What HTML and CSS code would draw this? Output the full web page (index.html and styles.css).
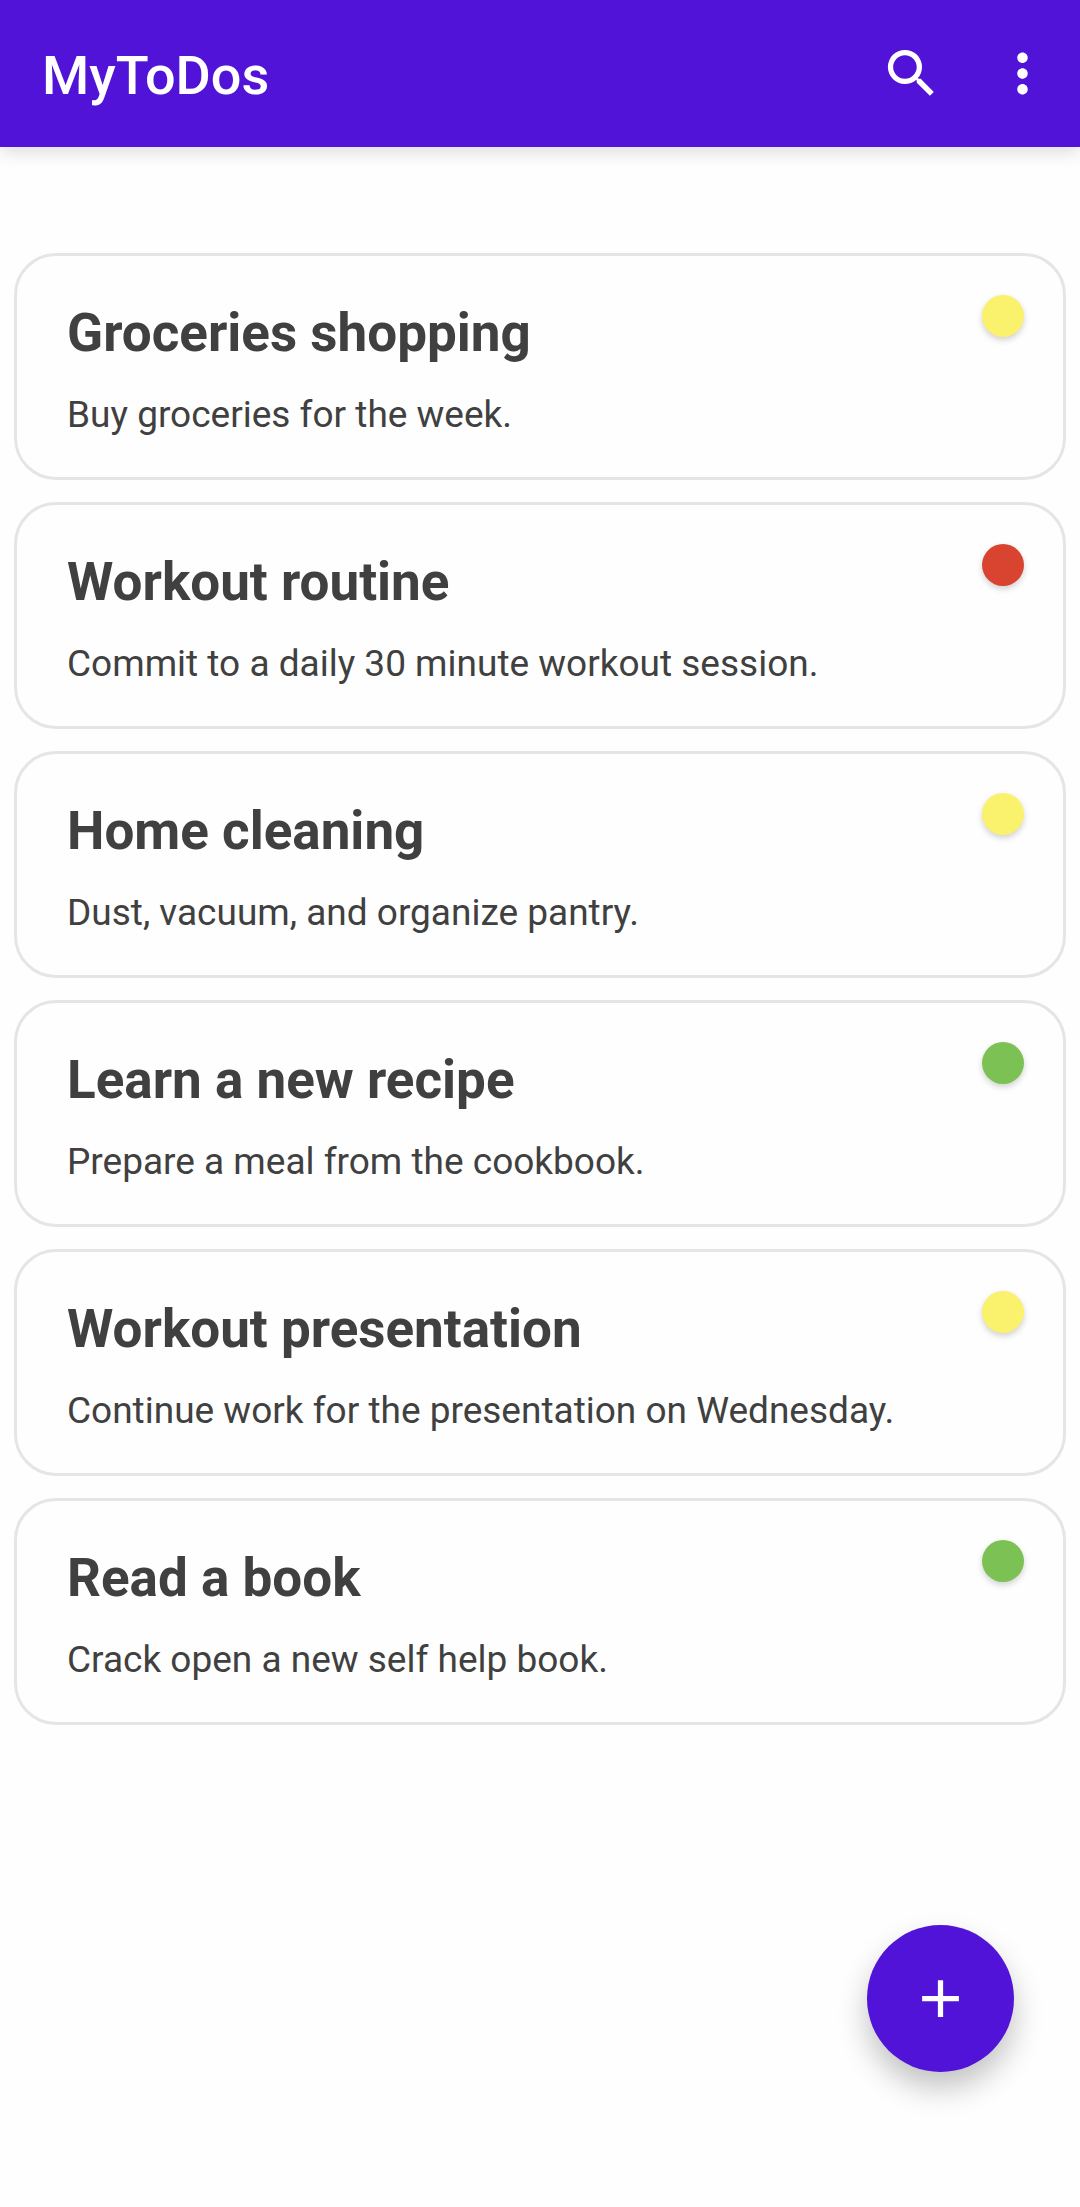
FILE: index.html
```html
<!DOCTYPE html>
<html lang="en">
<head>
<meta charset="utf-8">
<meta name="viewport" content="width=device-width, initial-scale=1">
<title>MyToDos</title>
<link rel="stylesheet" href="styles.css">
</head>
<body>
<header class="app-bar">
  <h1 class="app-title">MyToDos</h1>
  <button class="icon-button" type="button" aria-label="Search">
    <svg class="icon" viewBox="0 0 24 24" aria-hidden="true"><path d="M15.5 14h-.79l-.28-.27A6.471 6.471 0 0 0 16 9.5 6.5 6.5 0 1 0 9.5 16c1.61 0 3.09-.59 4.23-1.57l.27.28v.79l5 4.99L20.49 19l-4.99-5zm-6 0C7.01 14 5 11.99 5 9.5S7.01 5 9.5 5 14 7.01 14 9.5 11.99 14 9.5 14z"/></svg>
  </button>
  <button class="icon-button" type="button" aria-label="More options">
    <svg class="icon" viewBox="0 0 24 24" aria-hidden="true"><path d="M12 8c1.1 0 2-.9 2-2s-.9-2-2-2-2 .9-2 2 .9 2 2 2zm0 2c-1.1 0-2 .9-2 2s.9 2 2 2 2-.9 2-2-.9-2-2-2zm0 6c-1.1 0-2 .9-2 2s.9 2 2 2 2-.9 2-2-.9-2-2-2z"/></svg>
  </button>
</header>
<main>
  <ul class="todo-list">
    <li class="todo">
      <div class="todo-text">
        <h2 class="todo-title">Groceries shopping</h2>
        <p class="todo-note">Buy groceries for the week.</p>
      </div>
      <span class="priority priority-medium"></span>
    </li>
    <li class="todo">
      <div class="todo-text">
        <h2 class="todo-title">Workout routine</h2>
        <p class="todo-note">Commit to a daily 30 minute workout session.</p>
      </div>
      <span class="priority priority-high"></span>
    </li>
    <li class="todo">
      <div class="todo-text">
        <h2 class="todo-title">Home cleaning</h2>
        <p class="todo-note">Dust, vacuum, and organize pantry.</p>
      </div>
      <span class="priority priority-medium"></span>
    </li>
    <li class="todo">
      <div class="todo-text">
        <h2 class="todo-title">Learn a new recipe</h2>
        <p class="todo-note">Prepare a meal from the cookbook.</p>
      </div>
      <span class="priority priority-low"></span>
    </li>
    <li class="todo">
      <div class="todo-text">
        <h2 class="todo-title">Workout presentation</h2>
        <p class="todo-note">Continue work for the presentation on Wednesday.</p>
      </div>
      <span class="priority priority-medium"></span>
    </li>
    <li class="todo">
      <div class="todo-text">
        <h2 class="todo-title">Read a book</h2>
        <p class="todo-note">Crack open a new self help book.</p>
      </div>
      <span class="priority priority-low"></span>
    </li>
  </ul>
</main>
<button class="fab" type="button" aria-label="Add to-do">
  <svg class="icon" viewBox="0 0 24 24" aria-hidden="true"><path d="M19 13h-6v6h-2v-6H5v-2h6V5h2v6h6v2z"/></svg>
</button>
</body>
</html>
```
FILE: styles.css
```css
* {
  box-sizing: border-box;
}

body {
  margin: 0;
  background: #fefefe;
  color: #404040;
  font-family: Roboto, "Liberation Sans", sans-serif;
}

h1,
h2,
p {
  margin: 0;
}

button {
  display: flex;
  align-items: center;
  justify-content: center;
  padding: 0;
  border: 0;
  background: none;
  color: #fff;
  cursor: pointer;
}

.icon {
  display: block;
  width: 63px;
  height: 63px;
  fill: currentColor;
}

.app-bar {
  display: flex;
  align-items: center;
  gap: 48px;
  padding: 42px 26px 42px 42px;
  background: #5113d7;
  box-shadow: 0 4px 18px rgba(0, 0, 0, 0.15);
}

.app-title {
  flex: 1;
  padding-top: 4px;
  color: #fff;
  font-size: 54px;
  font-weight: 500;
  line-height: 58px;
}

.todo-list {
  display: flex;
  flex-direction: column;
  gap: 22px;
  margin: 0;
  padding: 106px 14px 200px;
  list-style: none;
}

.todo {
  display: flex;
  align-items: flex-start;
  gap: 24px;
  padding: 39px 39px 40px 50px;
  border: 3px solid #e5e5e5;
  border-radius: 42px;
}

.todo-text {
  display: flex;
  flex: 1;
  flex-direction: column;
  gap: 29px;
  padding-top: 7px;
}

.todo-title {
  font-size: 53px;
  font-weight: 700;
  line-height: 62px;
}

.todo-note {
  font-size: 37px;
  line-height: 44px;
}

.priority {
  width: 42px;
  height: 42px;
  border-radius: 50%;
  box-shadow: 0 3px 6px rgba(0, 0, 0, 0.18);
}

.priority-low {
  background: #7bc153;
}

.priority-medium {
  background: #faf16c;
}

.priority-high {
  background: #d84430;
}

.fab {
  position: fixed;
  right: 66px;
  bottom: 135px;
  width: 147px;
  height: 147px;
  border-radius: 50%;
  background: #5113d7;
  box-shadow: 0 16px 30px rgba(0, 0, 0, 0.24);
}
```
